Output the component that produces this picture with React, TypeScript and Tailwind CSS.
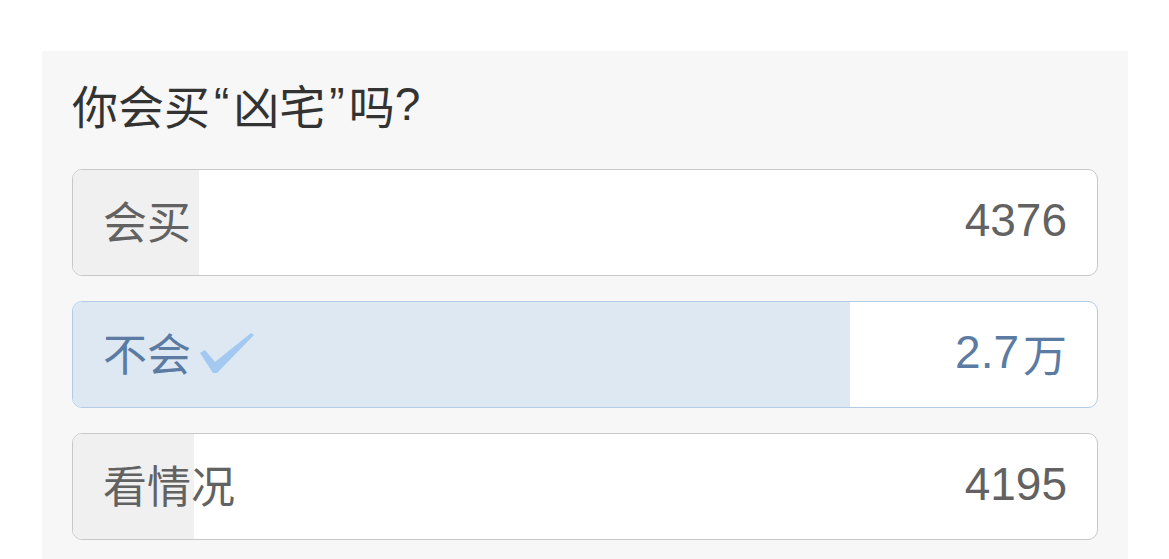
import React from 'react';

type Option = { label: string; count: number; display: string; unit?: string; selected?: boolean };

const options: Option[] = [
  { label: '会买', count: 4376, display: '4376' },
  { label: '不会', count: 27000, display: '2.7', unit: '万', selected: true },
  { label: '看情况', count: 4195, display: '4195' },
];

const total = options.reduce((s, o) => s + o.count, 0);

const Check = () => (
  <svg width="58" height="44" viewBox="0 0 58 44" className="ml-[7px] mt-[2px]">
    <path d="M2 22 L7 19 L17 31 L53 2 L56 4 L19 42 L15 42 Z" fill="#a3c9f1" />
  </svg>
);

const App = () => {
  return (
    <div className="min-h-[559px] bg-white pt-[51px] pl-[42px] overflow-hidden">
      <div className="w-[1086px] bg-[#f7f7f7] px-[30px] pt-[30px] pb-[40px] font-['Noto_Sans_CJK_SC','Noto_Sans',sans-serif]">
        {/* Question */}
        <h1 className="flex items-center h-[46px] text-[46px] leading-[46px] text-[#333333] mb-[42px]">
          <span>你会买</span>
          <span className="px-[4px] font-['Liberation_Sans',sans-serif]">“</span>
          <span>凶宅</span>
          <span className="px-[4px] font-['Liberation_Sans',sans-serif]">”</span>
          <span>吗</span>
          <span className="font-['Liberation_Sans',sans-serif]">?</span>
        </h1>

        {/* Options */}
        <div className="flex flex-col gap-[25px]">
          {options.map((o) => {
            const pct = (o.count / total) * 100;
            return (
              <div
                key={o.label}
                className={`relative h-[107px] rounded-[10px] border overflow-hidden bg-white ${
                  o.selected ? 'border-[#b3cbe6]' : 'border-[#c8c8c8]'
                }`}
              >
                <div
                  className={`absolute left-0 top-0 bottom-0 ${o.selected ? 'bg-[#dde8f3]' : 'bg-[#f0f0f0]'}`}
                  style={{ width: `${pct}%` }}
                />
                <div
                  className={`relative h-full flex items-center justify-between px-[30px] pb-[4px] ${
                    o.selected ? 'text-[#5b7ba2]' : 'text-[#626262]'
                  }`}
                >
                  <div className="flex items-center text-[44px] pb-[2px]">
                    <span>{o.label}</span>
                    {o.selected && <Check />}
                  </div>
                  <div className="flex items-center">
                    <span className="text-[46px] font-['Liberation_Sans',sans-serif]">{o.display}</span>
                    {o.unit && <span className="ml-[4px] text-[44px]">{o.unit}</span>}
                  </div>
                </div>
              </div>
            );
          })}
        </div>
      </div>
    </div>
  );
};

export default App;
